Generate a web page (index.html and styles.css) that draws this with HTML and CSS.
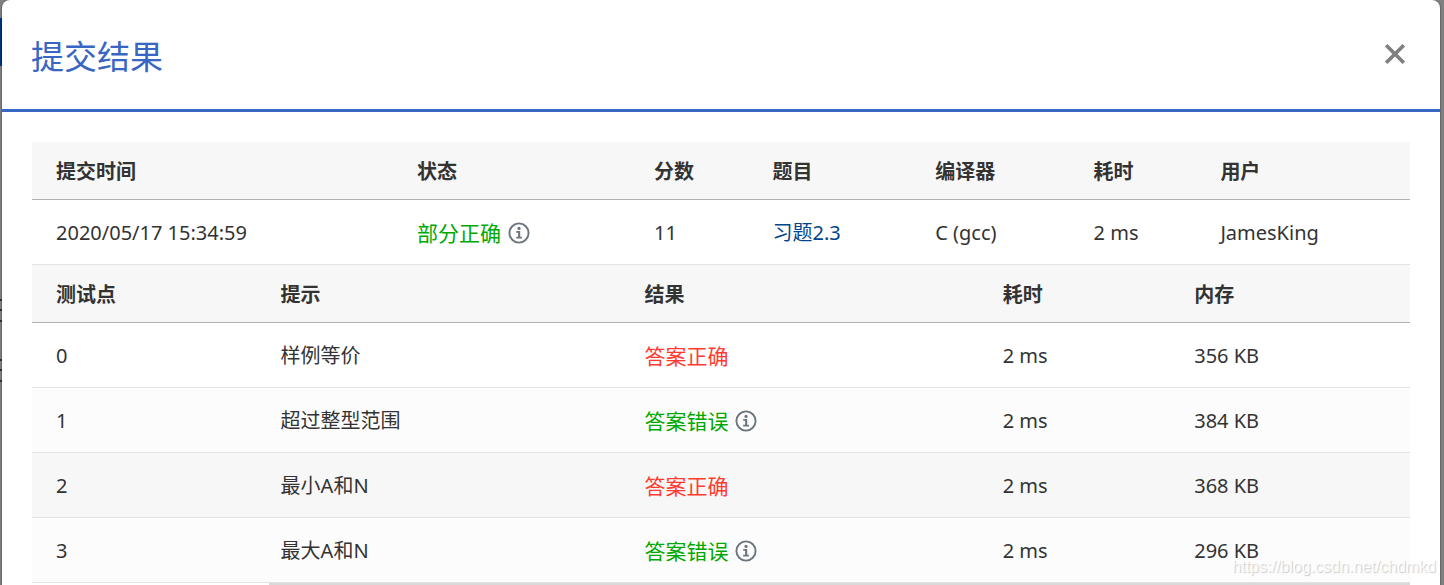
FILE: index.html
```html
<!DOCTYPE html>
<html lang="zh-CN">
<head>
  <meta charset="UTF-8" />
  <meta name="viewport" content="width=device-width, initial-scale=1.0"/>
  <title>提交结果</title>
  <link rel="stylesheet" href="styles.css">
</head>
<body>
  <div class="page-nav"></div>
  <div class="page-list"></div>

  <svg class="icon-defs" aria-hidden="true">
    <symbol id="info" viewBox="0 0 22 22">
      <circle cx="11" cy="11" r="9.6" fill="none" stroke="currentColor" stroke-width="1.9"/>
      <circle cx="11" cy="6.4" r="1.6" fill="currentColor"/>
      <path d="M8.2 9h4v5.7h1.7v1.7H8.2v-1.7h1.9v-4H8.2z" fill="currentColor"/>
    </symbol>
  </svg>

  <div class="modal" role="dialog" aria-labelledby="modalTitle">
    <div class="modal-header">
      <h1 id="modalTitle">提交结果</h1>
      <button class="close" type="button" aria-label="关闭">
        <svg viewBox="0 0 20 20"><path d="M2 2l16 16M18 2L2 18"/></svg>
      </button>
    </div>

    <div class="modal-body">
      <table class="summary">
        <thead>
          <tr>
            <th class="col-time">提交时间</th>
            <th class="col-status">状态</th>
            <th class="col-score">分数</th>
            <th class="col-problem">题目</th>
            <th class="col-compiler">编译器</th>
            <th class="col-cost">耗时</th>
            <th>用户</th>
          </tr>
        </thead>
        <tbody>
          <tr>
            <td>2020/05/17 15:34:59</td>
            <td><span class="status green">部分正确<svg class="info"><use href="#info"/></svg></span></td>
            <td>11</td>
            <td><a href="#">习题2.3</a></td>
            <td>C (gcc)</td>
            <td>2 ms</td>
            <td>JamesKing</td>
          </tr>
        </tbody>
      </table>

      <table class="cases">
        <thead>
          <tr>
            <th class="col-case">测试点</th>
            <th class="col-hint">提示</th>
            <th class="col-result">结果</th>
            <th class="col-used">耗时</th>
            <th>内存</th>
          </tr>
        </thead>
        <tbody>
          <tr>
            <td>0</td>
            <td>样例等价</td>
            <td><span class="status red">答案正确</span></td>
            <td>2 ms</td>
            <td>356 KB</td>
          </tr>
          <tr>
            <td>1</td>
            <td>超过整型范围</td>
            <td><span class="status green">答案错误<svg class="info"><use href="#info"/></svg></span></td>
            <td>2 ms</td>
            <td>384 KB</td>
          </tr>
          <tr class="active">
            <td>2</td>
            <td>最小A和N</td>
            <td><span class="status red">答案正确</span></td>
            <td>2 ms</td>
            <td>368 KB</td>
          </tr>
          <tr>
            <td>3</td>
            <td>最大A和N</td>
            <td><span class="status green">答案错误<svg class="info"><use href="#info"/></svg></span></td>
            <td>2 ms</td>
            <td>296 KB</td>
          </tr>
        </tbody>
      </table>
      <div class="scroll-bar"></div>
    </div>
  </div>

  <div class="watermark">https://blog.csdn.net/chdmkd</div>
</body>
</html>
```

FILE: styles.css
```css
* {
  box-sizing: border-box;
}

body {
  margin: 0;
  height: 100vh;
  overflow: hidden;
  position: relative;
  padding: 0 4px 0 2px;
  background-color: #808080;
  color: #333;
  font-family: "Noto Sans", "Noto Sans CJK SC", sans-serif;
  font-size: 20px;
  line-height: 28px;
}

/* Page behind the dialog */
.page-nav {
  position: absolute;
  top: 18px;
  left: 0;
  width: 50%;
  height: 48px;
  background-color: #00357a;
}

.page-list {
  position: absolute;
  top: 299px;
  left: 0;
  width: 50%;
  height: 84px;
  background: repeating-linear-gradient(#333 0 2px, #808080 2px 10px, #333 10px 12px, #808080 12px 21px, #333 21px 23px, #808080 23px 60px);
}

.icon-defs {
  position: absolute;
  width: 0;
  height: 0;
}

/* Dialog */
.modal {
  position: relative;
  min-height: 100vh;
  background-color: #fff;
  border-radius: 8px 8px 0 0;
  box-shadow: 0 0 1px 1px rgba(0, 0, 0, 0.2);
}

.modal-header {
  display: flex;
  align-items: flex-start;
  justify-content: space-between;
  padding: 31px 34px 29px 29px;
  border-bottom: 3px solid #3866c4;
}

.modal-header h1 {
  margin: 0;
  color: #3866c4;
  font-family: "Noto Sans CJK SC", sans-serif;
  font-size: 33px;
  font-weight: 400;
  line-height: 49px;
}

.close {
  display: flex;
  margin-top: 12px;
  padding: 0;
  border: none;
  background: none;
  color: #808080;
  cursor: pointer;
}

.close svg {
  width: 22px;
  height: 22px;
  fill: none;
  stroke: currentColor;
  stroke-width: 3.4;
}

.modal-body {
  padding: 30px;
}

/* Tables */
table {
  width: 100%;
  table-layout: fixed;
  border-collapse: separate;
  border-spacing: 0;
}

th,
td {
  padding: 2px 24px 0;
  text-align: left;
  white-space: nowrap;
}

th {
  height: 58px;
  background-color: #f7f7f7;
  border-bottom: 1px solid #b2b2b2;
  font-weight: 700;
}

td {
  height: 65px;
  border-bottom: 1px solid #e3e3e3;
}

.cases tbody tr:nth-child(even) td,
.cases tbody tr:last-child td {
  background-color: #fcfcfc;
}

.cases tbody tr.active td {
  background-color: #f7f7f7;
}

.col-time { width: 26.2%; }
.col-status { width: 17.2%; }
.col-score { width: 8.6%; }
.col-problem { width: 11.8%; }
.col-compiler { width: 11.5%; }
.col-cost { width: 9.2%; }

.col-case { width: 16.3%; }
.col-hint { width: 26.4%; }
.col-result { width: 26%; }
.col-used { width: 13.9%; }

a {
  color: #00458b;
  text-decoration: none;
}

.status {
  display: flex;
  align-items: center;
  gap: 7px;
  font-size: 21px;
}

.green {
  color: #00a800;
}

.red {
  color: #ff3b30;
}

.info {
  width: 22px;
  height: 22px;
  color: #6c757d;
}

.scroll-bar {
  height: 8px;
  margin-left: 237px;
  background-color: #d9d9d9;
}

.watermark {
  position: absolute;
  right: 8px;
  bottom: 8px;
  color: rgba(255, 255, 255, 0.8);
  font-family: "Liberation Sans", sans-serif;
  font-size: 16px;
  line-height: 20px;
  text-shadow: 1px 1px 1px rgba(0, 0, 0, 0.2);
}
```
